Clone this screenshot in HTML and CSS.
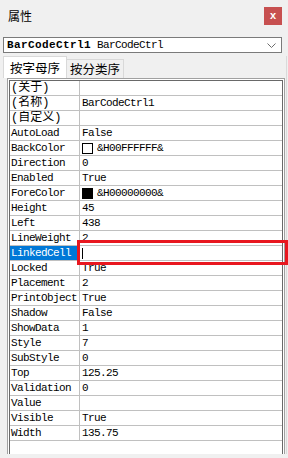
FILE: index.html
```html
<!DOCTYPE html>
<html>
    <head>
        <meta charset="utf-8">
        <title>属性</title>
        <link rel="stylesheet" href="styles.css">
    </head>
    <body>
        <div class="titlebar">
            <span class="title">属性</span>
            <span class="close">x</span>
        </div>
        <div class="combo">
            <span class="combo-text"><b>BarCodeCtrl1</b> BarCodeCtrl</span>
            <svg class="chevron" width="9" height="5" viewBox="0 0 9 5"><polyline points="0.5,0.5 4.5,4.5 8.5,0.5" fill="none" stroke="#6d6d6d" stroke-width="1"/></svg>
        </div>
        <div class="page">
            <div class="tabs">
                <div class="tab active">按字母序</div>
                <div class="tab">按分类序</div>
            </div>
            <div class="frame">
                <div class="grid">
                    <div class="row"><div class="name"><span class="cn">(关于)</span></div><div class="value"></div></div>
                    <div class="row"><div class="name"><span class="cn">(名称)</span></div><div class="value">BarCodeCtrl1</div></div>
                    <div class="row"><div class="name"><span class="cn">(自定义)</span></div><div class="value"></div></div>
                    <div class="row"><div class="name">AutoLoad</div><div class="value">False</div></div>
                    <div class="row"><div class="name">BackColor</div><div class="value"><span class="swatch"></span>&amp;H00FFFFFF&amp;</div></div>
                    <div class="row"><div class="name">Direction</div><div class="value">0</div></div>
                    <div class="row"><div class="name">Enabled</div><div class="value">True</div></div>
                    <div class="row"><div class="name">ForeColor</div><div class="value"><span class="swatch black"></span>&amp;H00000000&amp;</div></div>
                    <div class="row"><div class="name">Height</div><div class="value">45</div></div>
                    <div class="row"><div class="name">Left</div><div class="value">438</div></div>
                    <div class="row"><div class="name">LineWeight</div><div class="value">2</div></div>
                    <div class="row selected"><div class="name">LinkedCell</div><div class="value"><span class="caret"></span></div></div>
                    <div class="row"><div class="name">Locked</div><div class="value">True</div></div>
                    <div class="row"><div class="name">Placement</div><div class="value">2</div></div>
                    <div class="row"><div class="name">PrintObject</div><div class="value">True</div></div>
                    <div class="row"><div class="name">Shadow</div><div class="value">False</div></div>
                    <div class="row"><div class="name">ShowData</div><div class="value">1</div></div>
                    <div class="row"><div class="name">Style</div><div class="value">7</div></div>
                    <div class="row"><div class="name">SubStyle</div><div class="value">0</div></div>
                    <div class="row"><div class="name">Top</div><div class="value">125.25</div></div>
                    <div class="row"><div class="name">Validation</div><div class="value">0</div></div>
                    <div class="row"><div class="name">Value</div><div class="value"></div></div>
                    <div class="row"><div class="name">Visible</div><div class="value">True</div></div>
                    <div class="row"><div class="name">Width</div><div class="value">135.75</div></div>
                </div>
            </div>
        </div>
        <div class="highlight"></div>
    </body>
</html>
```

FILE: styles.css
```css
* {margin: 0px;padding: 0px;box-sizing: border-box;}
body {background-color: #f0f0f0;font-family: "Noto Sans CJK SC", sans-serif;font-size: 12px;color: #000;width: 288px;height: 458px;overflow: hidden;position: relative;}
.titlebar {height: 37px;display: flex;justify-content: space-between;align-items: flex-start;padding: 7px 6px 0px 8px;}
.title {font-size: 12px;line-height: 18px;}
.close {width: 18px;height: 18px;background-color: #c75050;color: #fff;font-family: "Liberation Sans", sans-serif;font-weight: bold;font-size: 11px;line-height: 17px;text-align: center;}
.combo {margin: 0px 6px 0px 3px;height: 16px;border: 1px solid #7a7a7a;background-color: #fff;display: flex;align-items: center;justify-content: space-between;padding: 0px 5px 0px 3px;}
.combo-text {font-family: "Liberation Mono", monospace;font-size: 11px;letter-spacing: -0.6px;line-height: 14px;white-space: pre;}
.combo-text b {letter-spacing: 0.4px;}
.chevron {display: block;}
.page {margin: 3px 0px 0px 3px;width: 284px;border-right: 1px solid #dadada;}
.tabs {display: flex;align-items: flex-end;height: 22px;}
.tab {font-size: 12.5px;line-height: 18px;height: 19px;border: 1px solid #d9d9d9;border-bottom: none;background-color: #f0f0f0;margin-left: -1px;text-align: center;width: 58px;white-space: nowrap;}
.tab.active {height: 22px;line-height: 22px;background-color: #fff;margin-left: 0px;width: 64px;position: relative;z-index: 1;}
.frame {margin-left: 4px;width: 278px;height: 376px;border: 1px solid #a0a0a0;border-bottom: none;padding: 1px 1px 0px 1px;background-color: #fff;}
.grid {height: 100%;border: 1px solid #696969;border-bottom: none;}
.row {display: flex;height: 15px;border-bottom: 1px solid #c0c0c0;font-family: "Liberation Mono", monospace;font-size: 11px;letter-spacing: -0.6px;line-height: 14px;}
.name {width: 70px;border-right: 1px solid #c0c0c0;padding-left: 1px;white-space: nowrap;overflow: hidden;}
.value {flex: 1;padding-left: 2px;white-space: nowrap;display: flex;align-items: center;}
.cn {font-family: "Liberation Mono", "Noto Sans CJK SC", monospace;font-size: 12px;letter-spacing: 0px;}
.selected .name {background-color: #0078d7;color: #fff;}
.swatch {display: inline-block;width: 11px;height: 11px;border: 1px solid #000;background-color: #fff;margin-right: 4px;}
.swatch.black {background-color: #000;}
.caret {display: inline-block;width: 1px;height: 11px;background-color: #000;margin-left: 0px;}
.highlight {position: absolute;left: 77px;top: 240px;width: 211px;height: 25px;border: 3px solid #e8171f;}
```
